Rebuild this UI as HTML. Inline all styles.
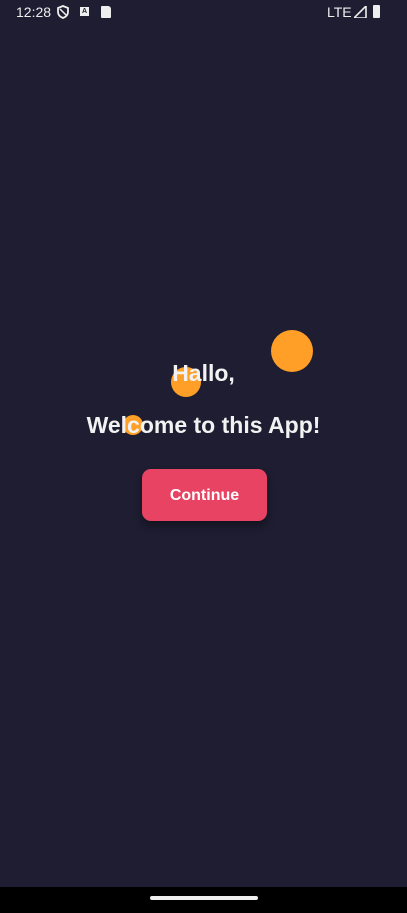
<!DOCTYPE html><html><head><style>
body{margin:0;width:407px;height:913px;background:#1e1d31;position:relative;overflow:hidden;font-family:"Liberation Sans",sans-serif;color:#f2f2f2}
.c{position:absolute;border-radius:50%;background:#ff9f27}
.t{position:absolute;left:0;width:407px;text-align:center;font-weight:bold;font-size:23px}
</style></head><body>
<div style="position:absolute;left:16px;top:4px;font-size:14px;color:#eee">12:28</div>
<svg style="position:absolute;left:56px;top:5px" width="14" height="14" viewBox="0 0 14 14"><path d="M7 1L2 3v4c0 3 2.2 5 5 6 2.8-1 5-3 5-6V3z" fill="none" stroke="#eee" stroke-width="1.8"/><path d="M4 4l6 6" stroke="#eee" stroke-width="1.5"/></svg>
<div style="position:absolute;left:80px;top:7px;width:9px;height:9px;background:#eee;font-size:7px;color:#1e1d31;text-align:center;line-height:9px;font-weight:bold">A</div>
<div style="position:absolute;left:101px;top:6px;width:10px;height:12px;background:#eee;border-radius:1px 3px 1px 1px"></div>
<div style="position:absolute;left:327px;top:4px;font-size:14px;color:#eee">LTE</div>
<svg style="position:absolute;left:354px;top:6px" width="13" height="12"><path d="M12 0V12H0z" fill="none" stroke="#eee" stroke-width="1.6"/></svg>
<div style="position:absolute;left:373px;top:5px;width:7px;height:13px;background:#eee;border-radius:1px"></div>
<div class="c" style="left:271px;top:330px;width:42px;height:42px"></div>
<div class="c" style="left:171px;top:367px;width:30px;height:30px"></div>
<div class="c" style="left:123px;top:415px;width:20px;height:20px"></div>
<div class="t" style="top:360px">Hallo,</div>
<div class="t" style="top:412px">Welcome to this App!</div>
<div style="position:absolute;left:142px;top:469px;width:125px;height:52px;background:#e84362;border-radius:9px;box-shadow:0 5px 8px rgba(0,0,0,.35);text-align:center;line-height:54px;font-weight:bold;font-size:16px;color:#fff">Continue</div>
<div style="position:absolute;left:0;top:887px;width:407px;height:26px;background:#000"></div>
<div style="position:absolute;left:150px;top:896px;width:108px;height:4px;border-radius:2px;background:#eee"></div>
</body></html>
